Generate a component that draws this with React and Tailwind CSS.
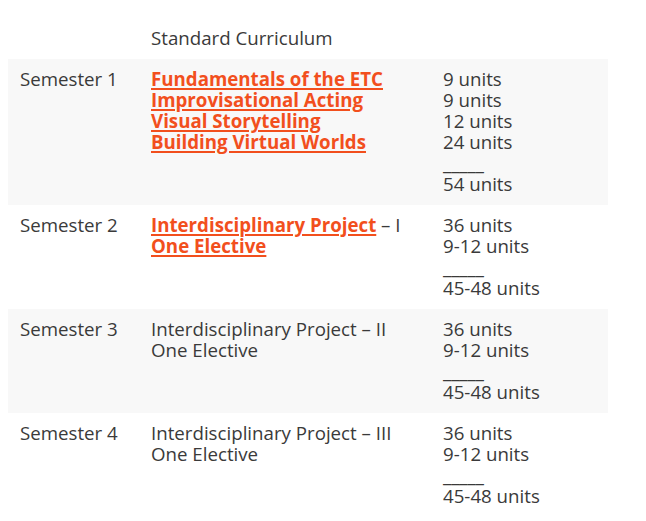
import React from 'react';

const link = "text-[#f24f1d] font-bold underline underline-offset-2 decoration-[1.5px]";

const rows = [
      {
            sem: "Semester 1",
            shade: true,
            courses: (
                  <>
                        <a href="#" className={link}>Fundamentals of the ETC</a><br />
                        <a href="#" className={link}>Improvisational Acting</a><br />
                        <a href="#" className={link}>Visual Storytelling</a><br />
                        <a href="#" className={link}>Building Virtual Worlds</a>
                  </>
            ),
            units: ["9 units", "9 units", "12 units", "24 units"],
            total: "54 units",
      },
      {
            sem: "Semester 2",
            shade: false,
            courses: (
                  <>
                        <a href="#" className={link}>Interdisciplinary Project</a> – I<br />
                        <a href="#" className={link}>One Elective</a>
                  </>
            ),
            units: ["36 units", "9-12 units"],
            total: "45-48 units",
      },
      {
            sem: "Semester 3",
            shade: true,
            courses: (
                  <>
                        Interdisciplinary Project – II<br />
                        One Elective
                  </>
            ),
            units: ["36 units", "9-12 units"],
            total: "45-48 units",
      },
      {
            sem: "Semester 4",
            shade: false,
            courses: (
                  <>
                        Interdisciplinary Project – III<br />
                        One Elective
                  </>
            ),
            units: ["36 units", "9-12 units"],
            total: "45-48 units",
      },
];

const App = () => {
      return (
            <div className="min-h-[521px] bg-white pt-[18px] px-2 text-[18.7px] leading-[21px] text-[#3a3a3a] font-['Open_Sans',sans-serif]">
                  <div className="w-[600px]">
                        <div className="grid grid-cols-[131px_292px_177px] pt-[9px] pb-[11px]">
                              <div></div>
                              <div className="px-3">Standard Curriculum</div>
                              <div></div>
                        </div>
                        {rows.map((r) => (
                              <div key={r.sem} className={`grid grid-cols-[131px_292px_177px] pt-[9px] pb-[11px] ${r.shade ? "bg-[#f8f8f8]" : ""}`}>
                                    <div className="px-3">{r.sem}</div>
                                    <div className="px-3">{r.courses}</div>
                                    <div className="px-3">
                                          {r.units.map((u, i) => (
                                                <div key={i}>{u}</div>
                                          ))}
                                          <div>_____</div>
                                          <div>{r.total}</div>
                                    </div>
                              </div>
                        ))}
                  </div>
            </div>
      );
};

export default App;
